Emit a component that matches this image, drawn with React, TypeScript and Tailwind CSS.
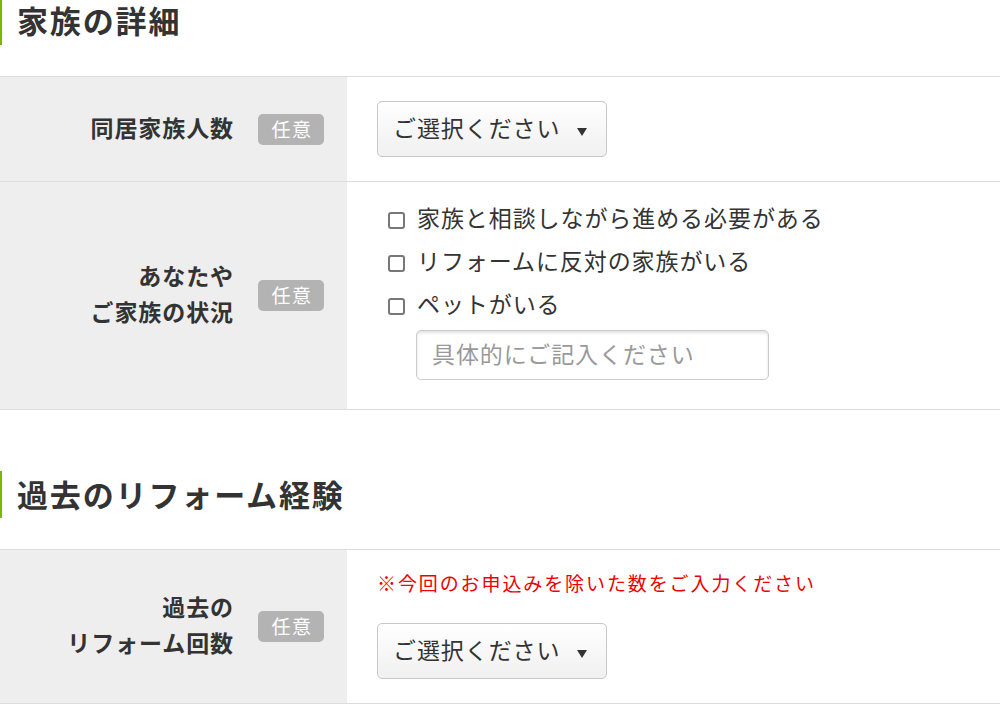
import React from "react";

const FONT = "font-['Noto_Sans_CJK_JP','Noto_Sans',sans-serif]";

function Badge() {
  return (
    <span className="inline-flex h-[31px] w-[66px] shrink-0 items-center justify-center rounded-[5px] bg-[#b3b3b3] pb-[2px] pl-[2px] text-[19px] leading-none tracking-[0.08em] text-white">
      任意
    </span>
  );
}

function Heading({ title, first }: { title: string; first?: boolean }) {
  return (
    <h2
      className={
        "flex items-center border-l-[2px] border-[#7ab800] pl-[15px] text-[31px] font-bold leading-none tracking-[0.06em] text-[#333] " +
        (first ? "h-[45px] pb-[6px]" : "h-[47px] pb-[3px]")
      }
    >
      {title}
    </h2>
  );
}

function SelectBox() {
  return (
    <div className="flex h-[56px] w-[230px] items-center justify-between rounded-[5px] border border-[#c8c8c8] bg-gradient-to-b from-white to-[#f0f0f0] pl-[15px] pr-[19px]">
      <span className="pb-[4px] text-[23px] leading-none tracking-[0.04em] text-[#333]">ご選択ください</span>
      <svg width="10" height="8" viewBox="0 0 10 8" className="mt-[5px]">
        <polygon points="0,0 10,0 5,8" fill="#333" />
      </svg>
    </div>
  );
}

function Row({ label, children }: { label: React.ReactNode; children: React.ReactNode }) {
  return (
    <div className="flex border-b border-[#ddd]">
      <div className="flex w-[347px] shrink-0 items-center justify-end gap-[24px] bg-[#eee] pr-[23px]">
        <div className="pb-[5px] text-right text-[23px] font-bold leading-[36px] tracking-[0.04em] text-[#333]">{label}</div>
        <Badge />
      </div>
      <div className="flex-1 px-[30px] py-[24px]">{children}</div>
    </div>
  );
}

function Check({ text }: { text: string }) {
  return (
    <label className="flex h-[26px] items-center">
      <span className="ml-[11px] mt-[2px] h-[17px] w-[17px] shrink-0 rounded-[3px] border-[2px] border-[#777] bg-white" />
      <span className="ml-[12px] pb-[3px] text-[23px] leading-none tracking-[0.04em] text-[#333]">{text}</span>
    </label>
  );
}

export default function App() {
  return (
    <div className={`${FONT} min-h-[708px] w-[1000px] overflow-hidden bg-white`}>
      <Heading title="家族の詳細" first />
      <div className="mt-[31px] border-t border-[#ddd]">
        <Row label="同居家族人数">
          <SelectBox />
        </Row>
        <Row
          label={
            <>
              あなたや
              <br />
              ご家族の状況
            </>
          }
        >
          <div className="flex flex-col gap-[17px]">
            <Check text="家族と相談しながら進める必要がある" />
            <Check text="リフォームに反対の家族がいる" />
            <Check text="ペットがいる" />
          </div>
          <div className="ml-[39px] mt-[12px] mb-[5px] flex h-[50px] w-[353px] items-center rounded-[5px] border border-[#ccc] pb-[3px] pl-[15px] shadow-[inset_0_2px_3px_rgba(0,0,0,0.12)]">
            <span className="text-[23px] leading-none tracking-[0.04em] text-[#999]">具体的にご記入ください</span>
          </div>
        </Row>
      </div>

      <div className="mt-[61px]">
        <Heading title="過去のリフォーム経験" />
      </div>
      <div className="mt-[31px] border-t border-[#ddd]">
        <Row
          label={
            <>
              過去の
              <br />
              リフォーム回数
            </>
          }
        >
          <p className="h-[20px] text-[19px] leading-[18px] tracking-[0.1em] text-[#e00]">
            ※今回のお申込みを除いた数をご入力ください
          </p>
          <div className="mt-[29px]">
            <SelectBox />
          </div>
        </Row>
      </div>
    </div>
  );
}
